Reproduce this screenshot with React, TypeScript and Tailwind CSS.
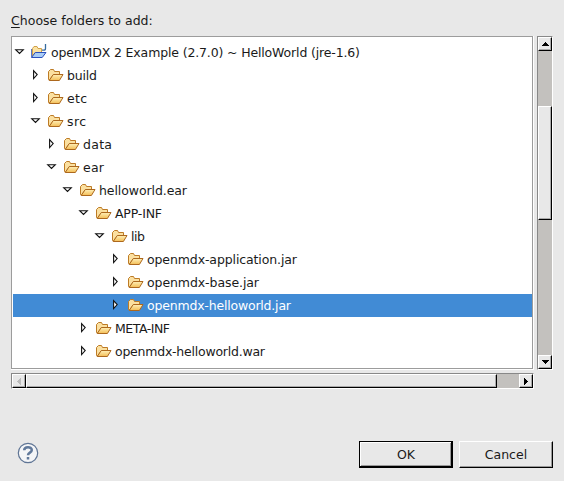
type Row = { label: string; depth: number; open?: boolean; root?: boolean; selected?: boolean; width: number };

const rows: Row[] = [
  { label: 'openMDX 2 Example (2.7.0) ~ HelloWorld (jre-1.6)', depth: 0, open: true, root: true, width: 309 },
  { label: 'build', depth: 1, width: 30 },
  { label: 'etc', depth: 1, width: 20 },
  { label: 'src', depth: 1, open: true, width: 19 },
  { label: 'data', depth: 2, width: 29 },
  { label: 'ear', depth: 2, open: true, width: 21 },
  { label: 'helloworld.ear', depth: 3, open: true, width: 88 },
  { label: 'APP-INF', depth: 4, open: true, width: 47 },
  { label: 'lib', depth: 5, open: true, width: 14 },
  { label: 'openmdx-application.jar', depth: 6, width: 150 },
  { label: 'openmdx-base.jar', depth: 6, width: 112 },
  { label: 'openmdx-helloworld.jar', depth: 6, selected: true, width: 144 },
  { label: 'META-INF', depth: 4, width: 55 },
  { label: 'openmdx-helloworld.war', depth: 4, width: 150 },
];

function Expander({ open }: { open?: boolean }) {
  return (
    <svg width="12" height="12" viewBox="0 0 12 12" className="shrink-0">
      {open ? (
        <path d="M1.7 3.7h7.6L5.5 7.5z" fill="#fff" stroke="#111" strokeWidth="1.1" />
      ) : (
        <path d="M3.6 1.6v8L7.2 5.6z" fill="#fff" stroke="#111" strokeWidth="1.1" />
      )}
    </svg>
  );
}

function Folder() {
  return (
    <svg width="16" height="16" viewBox="0 0 16 16" className="shrink-0">
      <defs>
        <linearGradient id="flap" x1="0" y1="0" x2="0" y2="1">
          <stop offset="0" stopColor="#fff0b8" />
          <stop offset="1" stopColor="#f3bd55" />
        </linearGradient>
      </defs>
      <path d="M.5 12.5V4.5L2.5 2.5H5.5L6.5 4.5H11.5V7.5H5.5L1.5 13Z" fill="#fbe0a0" stroke="#bd7b25" />
      <path d="M1.2 13.5 5.3 7.5H15L11.4 13.5Z" fill="url(#flap)" stroke="#ad681d" />
    </svg>
  );
}

function Project() {
  return (
    <svg width="18" height="18" viewBox="0 0 18 18" className="shrink-0">
      <path d="M3.5 13.5V5.5L5 3.5H8L9 5.5H12.5V9.5H6Z" fill="#fbe3a3" stroke="#d0a04a" />
      <path d="M2.5 14.5 6.3 9.5H17L13.2 14.5Z" fill="#a9cdf6" stroke="#2b50bd" />
      <path d="M2.5 6V14.5" stroke="#5878ca" />
      <path d="M16.5 1V5.5Q16.5 7.2 15 7.2H13" fill="none" stroke="#366b9e" strokeWidth="1.3" />
    </svg>
  );
}

function TreeRow({ label, depth, open, root, selected, width }: Row) {
  return (
    <div
      className={selected ? 'flex h-[23px] items-center bg-[#418bd5] pb-[2px] text-white' : 'flex h-[23px] items-center pb-[2px] text-[#1a1a1a]'}
      style={{ paddingLeft: 1 + depth * 16 }}
    >
      <Expander open={open} />
      <span className="ml-[3px] flex w-[22px] shrink-0">{root ? <Project /> : <span className="ml-[3px]"><Folder /></span>}</span>
      <svg width={width + 2} height="20" className="overflow-visible" fill="currentColor">
        <text x="0" y="15" textLength={width}>{label}</text>
      </svg>
    </div>
  );
}

const raised = 'flex items-center justify-center border border-t-white border-l-white border-r-black border-b-black bg-[#e8e8e8] shadow-[inset_-1px_-1px_0_#aaa]';

export default function App() {
  return (
    <main className="h-[481px] w-[564px] overflow-hidden bg-[#e8e8e8] pt-[11px] pl-[11px] font-['DejaVu_Sans',sans-serif] text-[12.5px] text-[#1a1a1a]">
      <p className="h-[25px] leading-[20px] tracking-[0.03px]"><span className="underline underline-offset-2">C</span>hoose folders to add:</p>
      <div className="flex gap-1">
        <div className="h-[334px] w-[523px] border-r border-b border-white">
          <div className="h-[333px] w-[522px] border border-[#9c9c9c] bg-white pt-1 pl-px">
            {rows.map((row) => <TreeRow key={row.label} {...row} />)}
          </div>
        </div>
        <div className="ml-[-1px] flex h-[334px] w-4 flex-col border border-t-[#888] border-r-white border-b-white border-l-[#888] bg-[#c3c1be]">
          <div className={`${raised} h-[14px]`}><svg width="7" height="4" shapeRendering="crispEdges"><path d="M3 0h1v1h1v1h1v1h1v1H0V3h1V2h1V1h1z" /></svg></div>
          <div className={`${raised} mt-[55px] h-[114px]`} />
          <div className={`${raised} mt-auto h-[14px]`}><svg width="7" height="4" shapeRendering="crispEdges"><path d="M0 0h7v1H6v1H5v1H4v1H3V3H2V2H1V1H0z" /></svg></div>
        </div>
      </div>
      <div className="mt-[3px] flex h-4 w-[523px] border border-t-[#888] border-r-white border-b-white border-l-[#888] bg-[#c3c1be]">
        <div className={`${raised} w-[14px]`}><svg width="4" height="7" shapeRendering="crispEdges"><path fill="#bbb" d="M4 0v7H3V6H2V5H1V4H0V3h1V2h1V1h1V0z" /></svg></div>
        <div className={`${raised} w-[471px]`} />
        <div className={`${raised} ml-auto w-[14px]`}><svg width="4" height="7" shapeRendering="crispEdges"><path d="M0 0h1v1h1v1h1v1h1v1H3v1H2v1H1v1H0z" /></svg></div>
      </div>
      <div className="mt-[52px] flex h-[27px] items-start pl-[6px]">
        <svg width="22" height="22" viewBox="0 0 22 22" className="mt-px">
          <circle cx="11" cy="11" r="9.7" fill="#f4f5f7" stroke="#5f7595" strokeWidth="1.2" />
          <path d="M7.2 8.3C7.2 4.1 14.8 4.2 14.8 8C14.8 10.6 11 10.6 11 13.2M11 15v2.5" fill="none" stroke="#61799b" strokeWidth="2.5" />
        </svg>
        <button className="ml-[320px] h-[27px] w-[94px] border border-r-2 border-b-2 border-black bg-[#e8e8e8] pt-[2px] pl-px shadow-[inset_1px_1px_0_#fff,inset_-1px_-1px_0_#999]">OK</button>
        <button className="ml-[6px] h-[27px] w-[94px] border border-t-white border-r-black border-b-black border-l-white bg-[#e8e8e8] pt-px shadow-[inset_-1px_-1px_0_#999]">Cancel</button>
      </div>
    </main>
  );
}
